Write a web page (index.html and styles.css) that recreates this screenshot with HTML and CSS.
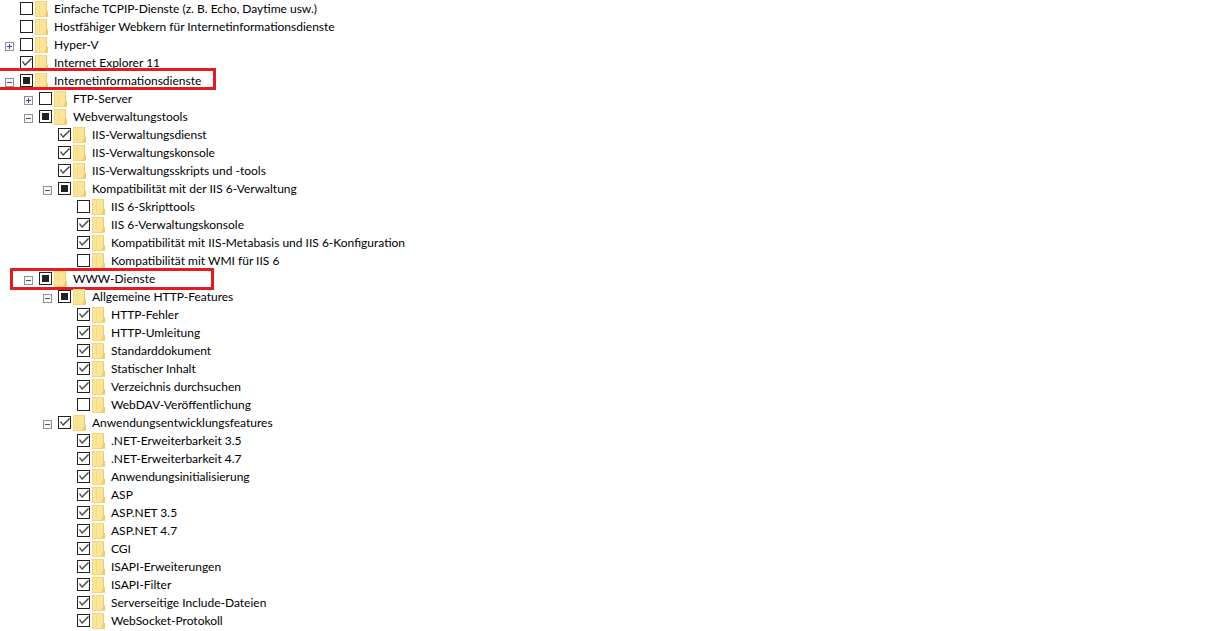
FILE: index.html
```html
<!DOCTYPE html>
<html lang="de">
<head>
<meta charset="UTF-8">
<meta name="viewport" content="width=device-width, initial-scale=1.0">
<title>Windows-Features</title>
<link rel="stylesheet" href="styles.css">
</head>
<body>
  <!-- Ordnersymbol -->
  <svg class="symbols" aria-hidden="true">
    <symbol id="folder" viewBox="0 0 13 16">
      <path d="M0 0h12v16H0z" fill="#fce596"/>
      <path d="M0 0h12v1H1v15H0z" fill="#f3d67e"/>
      <path d="M4 2h1v12H4z" fill="#f8dc85"/>
      <path d="M11 1h1v9h1v6H9l2-5z" fill="#eecb68"/>
      <path d="M0 15h13v1H0z" fill="#f3d67e"/>
    </symbol>
  </svg>

  <ul class="tree">
    <li><label class="row"><input type="checkbox"><svg class="folder"><use href="#folder"/></svg><span>Einfache TCPIP-Dienste (z. B. Echo, Daytime usw.)</span></label></li>
    <li><label class="row"><input type="checkbox"><svg class="folder"><use href="#folder"/></svg><span>Hostfähiger Webkern für Internetinformationsdienste</span></label></li>
    <li class="parent">
      <button class="toggle closed" aria-label="Hyper-V erweitern"></button>
      <label class="row"><input type="checkbox"><svg class="folder"><use href="#folder"/></svg><span>Hyper-V</span></label>
    </li>
    <li><label class="row"><input type="checkbox" checked><svg class="folder"><use href="#folder"/></svg><span>Internet Explorer 11</span></label></li>
    <li class="parent marked marked-root">
      <button class="toggle" aria-label="Internetinformationsdienste reduzieren"></button>
      <label class="row"><input type="checkbox" class="partial"><svg class="folder"><use href="#folder"/></svg><span>Internetinformationsdienste</span></label>
    </li>
    <li>
      <ul>
        <li class="parent">
          <button class="toggle closed" aria-label="FTP-Server erweitern"></button>
          <label class="row"><input type="checkbox"><svg class="folder"><use href="#folder"/></svg><span>FTP-Server</span></label>
        </li>
        <li class="parent">
          <button class="toggle" aria-label="Webverwaltungstools reduzieren"></button>
          <label class="row"><input type="checkbox" class="partial"><svg class="folder"><use href="#folder"/></svg><span>Webverwaltungstools</span></label>
        </li>
        <li>
          <ul>
            <li><label class="row"><input type="checkbox" checked><svg class="folder"><use href="#folder"/></svg><span>IIS-Verwaltungsdienst</span></label></li>
            <li><label class="row"><input type="checkbox" checked><svg class="folder"><use href="#folder"/></svg><span>IIS-Verwaltungskonsole</span></label></li>
            <li><label class="row"><input type="checkbox" checked><svg class="folder"><use href="#folder"/></svg><span>IIS-Verwaltungsskripts und -tools</span></label></li>
            <li class="parent">
              <button class="toggle" aria-label="Kompatibilität mit der IIS 6-Verwaltung reduzieren"></button>
              <label class="row"><input type="checkbox" class="partial"><svg class="folder"><use href="#folder"/></svg><span>Kompatibilität mit der IIS 6-Verwaltung</span></label>
            </li>
            <li>
              <ul>
                <li><label class="row"><input type="checkbox"><svg class="folder"><use href="#folder"/></svg><span>IIS 6-Skripttools</span></label></li>
                <li><label class="row"><input type="checkbox" checked><svg class="folder"><use href="#folder"/></svg><span>IIS 6-Verwaltungskonsole</span></label></li>
                <li><label class="row"><input type="checkbox" checked><svg class="folder"><use href="#folder"/></svg><span>Kompatibilität mit IIS-Metabasis und IIS 6-Konfiguration</span></label></li>
                <li><label class="row"><input type="checkbox"><svg class="folder"><use href="#folder"/></svg><span>Kompatibilität mit WMI für IIS 6</span></label></li>
              </ul>
            </li>
          </ul>
        </li>
        <li class="parent marked">
          <button class="toggle" aria-label="WWW-Dienste reduzieren"></button>
          <label class="row"><input type="checkbox" class="partial"><svg class="folder"><use href="#folder"/></svg><span>WWW-Dienste</span></label>
        </li>
        <li>
          <ul>
            <li class="parent">
              <button class="toggle" aria-label="Allgemeine HTTP-Features reduzieren"></button>
              <label class="row"><input type="checkbox" class="partial"><svg class="folder"><use href="#folder"/></svg><span>Allgemeine HTTP-Features</span></label>
            </li>
            <li>
              <ul>
                <li><label class="row"><input type="checkbox" checked><svg class="folder"><use href="#folder"/></svg><span>HTTP-Fehler</span></label></li>
                <li><label class="row"><input type="checkbox" checked><svg class="folder"><use href="#folder"/></svg><span>HTTP-Umleitung</span></label></li>
                <li><label class="row"><input type="checkbox" checked><svg class="folder"><use href="#folder"/></svg><span>Standarddokument</span></label></li>
                <li><label class="row"><input type="checkbox" checked><svg class="folder"><use href="#folder"/></svg><span>Statischer Inhalt</span></label></li>
                <li><label class="row"><input type="checkbox" checked><svg class="folder"><use href="#folder"/></svg><span>Verzeichnis durchsuchen</span></label></li>
                <li><label class="row"><input type="checkbox"><svg class="folder"><use href="#folder"/></svg><span>WebDAV-Veröffentlichung</span></label></li>
              </ul>
            </li>
            <li class="parent">
              <button class="toggle" aria-label="Anwendungsentwicklungsfeatures reduzieren"></button>
              <label class="row"><input type="checkbox" checked><svg class="folder"><use href="#folder"/></svg><span>Anwendungsentwicklungsfeatures</span></label>
            </li>
            <li>
              <ul>
                <li><label class="row"><input type="checkbox" checked><svg class="folder"><use href="#folder"/></svg><span>.NET-Erweiterbarkeit 3.5</span></label></li>
                <li><label class="row"><input type="checkbox" checked><svg class="folder"><use href="#folder"/></svg><span>.NET-Erweiterbarkeit 4.7</span></label></li>
                <li><label class="row"><input type="checkbox" checked><svg class="folder"><use href="#folder"/></svg><span>Anwendungsinitialisierung</span></label></li>
                <li><label class="row"><input type="checkbox" checked><svg class="folder"><use href="#folder"/></svg><span>ASP</span></label></li>
                <li><label class="row"><input type="checkbox" checked><svg class="folder"><use href="#folder"/></svg><span>ASP.NET 3.5</span></label></li>
                <li><label class="row"><input type="checkbox" checked><svg class="folder"><use href="#folder"/></svg><span>ASP.NET 4.7</span></label></li>
                <li><label class="row"><input type="checkbox" checked><svg class="folder"><use href="#folder"/></svg><span>CGI</span></label></li>
                <li><label class="row"><input type="checkbox" checked><svg class="folder"><use href="#folder"/></svg><span>ISAPI-Erweiterungen</span></label></li>
                <li><label class="row"><input type="checkbox" checked><svg class="folder"><use href="#folder"/></svg><span>ISAPI-Filter</span></label></li>
                <li><label class="row"><input type="checkbox" checked><svg class="folder"><use href="#folder"/></svg><span>Serverseitige Include-Dateien</span></label></li>
                <li><label class="row"><input type="checkbox" checked><svg class="folder"><use href="#folder"/></svg><span>WebSocket-Protokoll</span></label></li>
              </ul>
            </li>
          </ul>
        </li>
      </ul>
    </li>
  </ul>
</body>
</html>
```
FILE: styles.css
```css
body {
  margin: 0;
  background-color: #fff;
  color: #000;
  font-family: Lato, "Open Sans", sans-serif;
  font-size: 12px;
  line-height: 18px;
}

.symbols {
  display: none;
}

ul {
  margin: 0;
  padding: 0;
  list-style: none;
}

ul ul {
  padding-left: 19px;
}

.row {
  display: flex;
  align-items: center;
  height: 18px;
  margin-left: 20px;
  white-space: nowrap;
}

.row span {
  margin-left: 6px;
}

/* Zeilen mit Plus/Minus */
.parent {
  display: flex;
  align-items: center;
  padding-left: 5px;
  position: relative;
}

.parent .row {
  margin-left: 6px;
}

.toggle {
  box-sizing: border-box;
  width: 9px;
  height: 9px;
  margin: 2px 0 0;
  padding: 0;
  border: 1px solid #919191;
  background: linear-gradient(#3c4f9c, #3c4f9c) center / 5px 1px no-repeat #f8f8f8;
}

.toggle.closed {
  background:
    linear-gradient(#3c4f9c, #3c4f9c) center / 5px 1px no-repeat,
    linear-gradient(#3c4f9c, #3c4f9c) center / 1px 5px no-repeat #f8f8f8;
}

input {
  appearance: none;
  display: grid;
  place-items: center;
  box-sizing: border-box;
  width: 13px;
  height: 13px;
  margin: 0 2px 1px 0;
  border: 1px solid #222;
  background-color: #fff;
}

/* Häkchen */
input:checked::before {
  content: "";
  width: 11px;
  height: 11px;
  background-color: #444;
  clip-path: polygon(1px 5px, 2px 4px, 4px 7px, 10px 1px, 11px 2px, 4px 9px);
}

/* teilweise ausgewählt */
.partial::before {
  content: "";
  width: 7px;
  height: 7px;
  background-color: #222;
}

.folder {
  width: 13px;
  height: 16px;
}

/* rote Markierung */
.marked::after {
  content: "";
  position: absolute;
  box-sizing: border-box;
  top: -2px;
  bottom: -2px;
  left: -9px;
  width: 204px;
  border: 3px solid #e31b23;
  pointer-events: none;
}

.marked-root::after {
  top: -4px;
  bottom: 0;
  left: 0;
  width: 216px;
  border-left: 0;
}
```
